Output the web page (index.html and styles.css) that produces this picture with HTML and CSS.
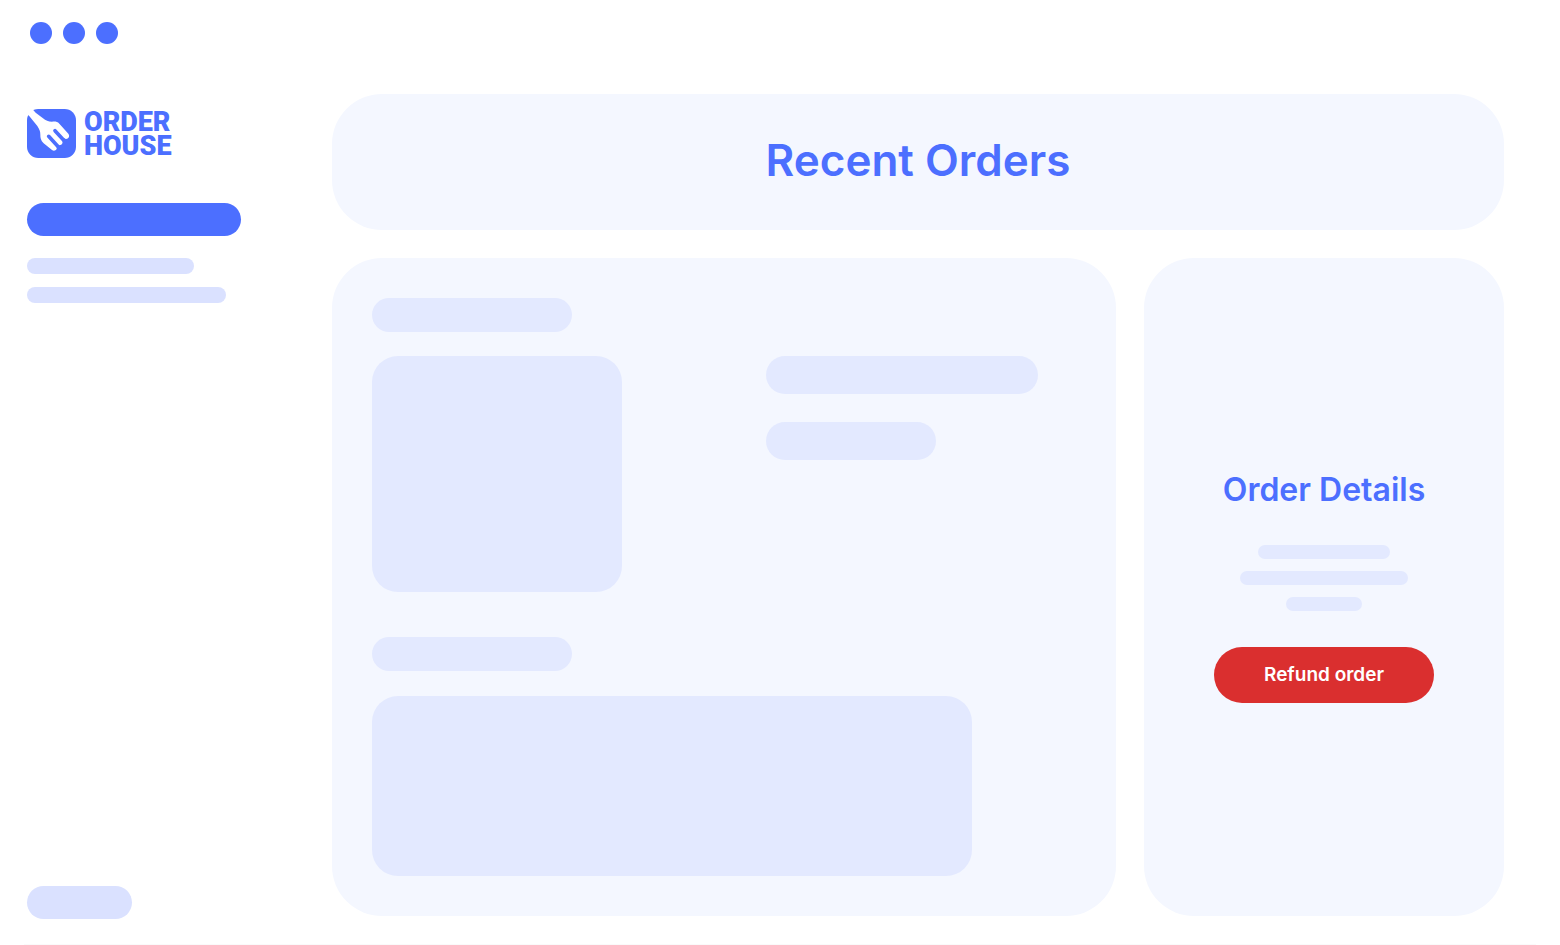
FILE: index.html
```html
<!DOCTYPE html>
<html lang="en">
<head>
<meta charset="utf-8">
<meta name="viewport" content="width=device-width, initial-scale=1">
<title>Order House</title>
<link rel="stylesheet" href="styles.css">
</head>
<body>
<div class="window">
  <aside class="sidebar">
    <div class="dots"><span class="dot"></span><span class="dot"></span><span class="dot"></span></div>
    <div class="brand">
      <svg class="brand-icon" viewBox="0 0 147 147" aria-hidden="true">
        <rect width="147" height="147" rx="34" fill="#4c6fff"/>
        <path fill="#fff" d="M0 0H14C19 2 21 6 26 11L48 28C56 35 64 38 75 38C85 37 91 38 97 44L124 74C131 83 121 94 112 88L104 91C112 103 101 113 92 107L87 110C94 120 84 129 75 123L50 103C41 94 40 86 40 77C40 67 37 60 31 51L6 20C3 17 1 19 0 22Z"/>
        <path fill="none" stroke="#4c6fff" stroke-width="11" stroke-linecap="round" d="M84 65L113 97M65 82L95 115"/>
      </svg>
      <div class="brand-name">ORDER<br>HOUSE</div>
    </div>
    <div class="nav">
      <div class="nav-active"></div>
      <div class="nav-line nav-line-short"></div>
      <div class="nav-line nav-line-long"></div>
    </div>
    <div class="account"></div>
  </aside>
  <main class="main">
    <header class="panel title-panel"><h1 class="title">Recent Orders</h1></header>
    <div class="columns">
      <section class="panel orders">
        <div class="block label"></div>
        <div class="order-row">
          <div class="block photo"></div>
          <div class="facts">
            <div class="block fact fact-long"></div>
            <div class="block fact fact-short"></div>
          </div>
        </div>
        <div class="block label"></div>
        <div class="block notes"></div>
      </section>
      <section class="panel details">
        <h2 class="details-title">Order Details</h2>
        <div class="detail-lines">
          <div class="block line line-medium"></div>
          <div class="block line line-long"></div>
          <div class="block line line-short"></div>
        </div>
        <button class="refund" type="button">Refund order</button>
      </section>
    </div>
  </main>
</div>
</body>
</html>
```
FILE: styles.css
```css
* { box-sizing: border-box; }

body {
  margin: 0;
  background: #fff;
  color: #4c6fff;
  font-family: Inter, "Liberation Sans", sans-serif;
}

.window {
  display: grid;
  grid-template-columns: 305px minmax(0, 1fr);
  min-height: 100vh;
  padding: 0 56px 0 27px;
  background: linear-gradient(#fafafa, #fafafa) center bottom / calc(100% - 48px) 1px no-repeat;
}

.sidebar {
  display: flex;
  flex-direction: column;
  align-items: flex-start;
  padding: 22px 0 26px;
}

.dots { display: flex; gap: 11px; padding-left: 3px; }
.dot { width: 22px; height: 22px; border-radius: 50%; background: #4c6fff; }

.brand { display: flex; align-items: flex-end; gap: 8px; height: 49px; margin-top: 65px; }
.brand-icon { width: 49px; height: 49px; }
.brand-name { font: 900 27px/24px Roboto, "Liberation Sans", sans-serif; }

.nav { display: flex; flex-direction: column; gap: 13px; margin-top: 45px; }
.nav-active { width: 214px; height: 33px; margin-bottom: 9px; border-radius: 17px; background: #4c6fff; }
.nav-line { height: 16px; border-radius: 8px; background: #dae1ff; }
.nav-line-short { width: 167px; }
.nav-line-long { width: 199px; }

.account { width: 105px; height: 33px; margin-top: auto; border-radius: 17px; background: #dae1ff; }

.main {
  display: flex;
  flex-direction: column;
  gap: 28px;
  padding: 94px 0 29px;
}

.panel { border-radius: 50px; background: #f4f7ff; }
.title-panel { padding: 38px 40px 42px; text-align: center; }
.title { margin: 0; font-size: 44px; line-height: 56px; font-weight: 600; }

.columns {
  display: grid;
  flex: 1;
  grid-template-columns: minmax(0, 1fr) 360px;
  gap: 28px;
}

.orders { padding: 40px; }
.block { background: #e3e9ff; }
.label { width: 200px; height: 34px; border-radius: 17px; }
.order-row { display: flex; justify-content: space-between; margin: 24px 0 45px; }
.photo { width: 250px; height: 236px; border-radius: 26px; }
.facts { display: flex; flex-direction: column; gap: 28px; margin-right: 38px; }
.fact { height: 38px; border-radius: 19px; }
.fact-long { width: 272px; }
.fact-short { width: 170px; }
.notes { max-width: 600px; height: 180px; margin-top: 25px; border-radius: 26px; }

.details {
  display: flex;
  flex-direction: column;
  align-items: center;
  justify-content: center;
  padding: 40px 40px 42px;
}
.details-title { margin: 0; font-size: 32px; line-height: 40px; font-weight: 600; }
.detail-lines { display: flex; flex-direction: column; align-items: center; gap: 12px; margin: 35px 0 36px; }
.line { height: 14px; border-radius: 7px; }
.line-medium { width: 132px; }
.line-long { width: 168px; }
.line-short { width: 76px; }
.refund {
  width: 220px;
  height: 56px;
  border: 0;
  border-radius: 28px;
  background: #da2f2f;
  color: #fff;
  font: 600 19px/24px Inter, "Liberation Sans", sans-serif;
}
```
